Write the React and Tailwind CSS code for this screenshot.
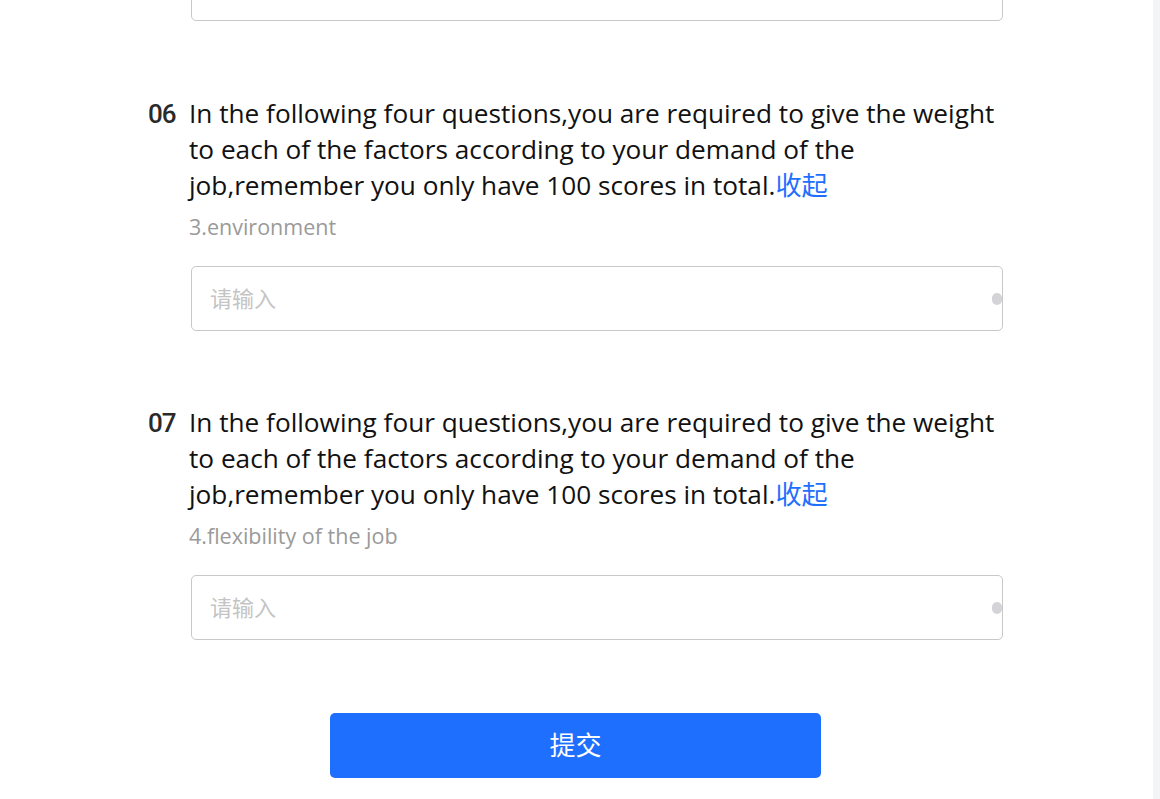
const TITLE =
  "In the following four questions,you are required to give the weight to each of the factors according to your demand of the job,remember you only have 100 scores in total.";

const questions = [
  { no: "06", sub: "3.environment" },
  { no: "07", sub: "4.flexibility of the job" },
];

function Field() {
  return (
    <div className="relative ml-[2px] flex h-[65px] w-[812px] items-center rounded-[5px] border border-[#c8c8c8] bg-white pl-[18px]">
      <span className="text-[22px] text-[#c4c4c4]">请输入</span>
      <span className="absolute right-[0px] top-[26px] h-[12px] w-[10px] rounded-full bg-[#d4d4d8]" />
    </div>
  );
}

function Question({ no, sub, first }) {
  return (
    <div className={first ? "flex pt-[74px]" : "flex pt-[73px]"}>
      <div className="w-[41px] pt-[1px] font-['Roboto',sans-serif] text-[26px] font-medium leading-[36px] tracking-[-1px] text-[#2a2a2a]">
        {no}
      </div>
      <div className="flex flex-col">
        <p className="w-[830px] text-[26.2px] leading-[36px] text-[#111]">
          {TITLE}
          <span className="text-[#1f6fff]">收起</span>
        </p>
        <p className="mt-[10px] text-[21.5px] leading-[28px] text-[#9a9a9a]">{sub}</p>
        <div className="mt-[25px]">
          <Field />
        </div>
      </div>
    </div>
  );
}

export default function App() {
  return (
    <div className="flex h-[799px] w-[1160px] overflow-hidden bg-white font-['Open_Sans','Noto_Sans_CJK_SC',sans-serif]">
      <div className="flex-1 overflow-hidden">
        <div className="-mt-[44px] pl-[148px]">
          <div className="ml-[43px] h-[65px] w-[812px] rounded-[5px] border border-[#c8c8c8]" />
          {questions.map((q, i) => (
            <Question key={q.no} first={i === 0} {...q} />
          ))}
          <div className="mt-[73px] flex pl-[182px]">
            <button className="h-[65px] w-[491px] rounded-[5px] bg-[#1f6fff] text-[26px] text-white">
              提交
            </button>
          </div>
        </div>
      </div>
      <div className="w-[7px] bg-[#f3f4f6]" />
    </div>
  );
}
